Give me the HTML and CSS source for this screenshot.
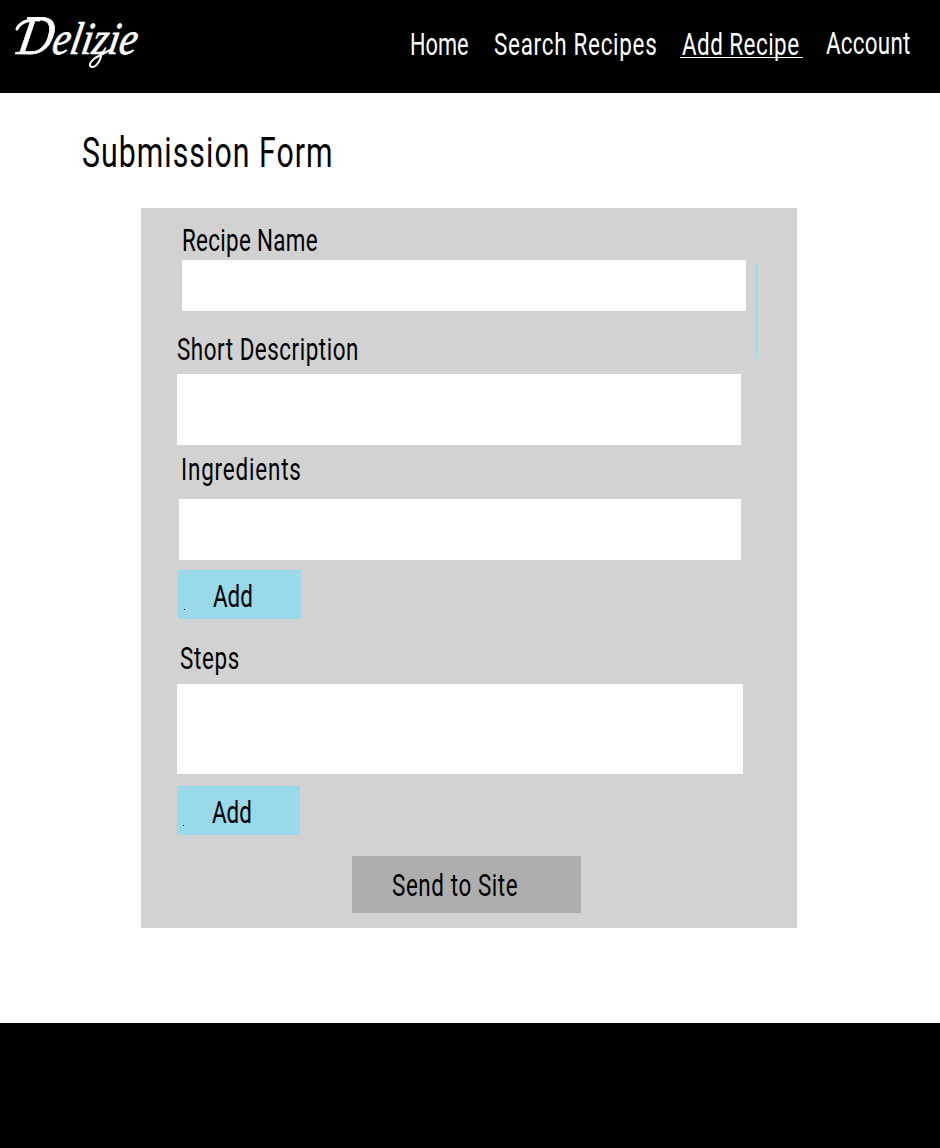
FILE: index.html
```html
<!DOCTYPE html>
<html lang="en">
<head>
<meta charset="utf-8">
<title>Delizie - Add Recipe</title>
<link rel="stylesheet" href="styles.css">
</head>
<body>
<header class="site-header">
  <div class="logo">
    <span class="logo-text"><span class="logo-cap">D</span>elizie</span>
    <svg class="logo-swash" width="140" height="80" viewBox="0 0 140 80" fill="none" stroke="#fff" stroke-linecap="round" stroke-linejoin="round">
      <path stroke-width="2" d="M100 53C103 57 97 67 92 67C88 66 90 62 95 58L112 49"/>
      <path stroke-width="3" d="M17 29C20 22 29 19 39 20"/>
    </svg>
  </div>
  <nav class="nav">
    <a class="nav-item home"><span class="type">Home</span></a>
    <a class="nav-item search"><span class="type">Search Recipes</span></a>
    <a class="nav-item add active"><span class="type">Add Recipe</span></a>
    <a class="nav-item account"><span class="type">Account</span></a>
  </nav>
</header>
<main class="main">
  <h1 class="title"><span class="type">Submission Form</span></h1>
  <form class="panel">
    <label class="label label-name"><span class="type">Recipe Name</span></label>
    <div class="field field-name"></div>
    <label class="label label-desc"><span class="type">Short Description</span></label>
    <div class="field field-desc"></div>
    <label class="label label-ingredients"><span class="type">Ingredients</span></label>
    <div class="field field-ingredients"></div>
    <div class="add-button add-ingredient"><i class="dot"></i><span class="type">Add</span></div>
    <label class="label label-steps"><span class="type">Steps</span></label>
    <div class="field field-steps"></div>
    <div class="add-button add-step"><i class="dot"></i><span class="type">Add</span></div>
    <div class="send-button"><span class="type">Send to Site</span></div>
    <i class="scroll-line"></i>
  </form>
</main>
<footer class="site-footer"></footer>
</body>
</html>
```
FILE: styles.css
```css
* { box-sizing: border-box; }
body {
  margin: 0;
  display: flex;
  flex-direction: column;
  height: 1148px;
  overflow: hidden;
  background: #fff;
  color: #000;
  font: 400 32px/32px Roboto, sans-serif;
}
.type {
  display: block;
  width: max-content;
  white-space: nowrap;
  transform-origin: 0 0;
  transform: scaleX(var(--fit, .7));
}

.site-header {
  display: flex;
  justify-content: space-between;
  height: 93px;
  background: #000;
  color: #fff;
}
.logo { position: relative; width: 140px; padding: 5px 0 0 16px; }
.logo-text {
  display: block;
  width: max-content;
  font: italic 400 46px/60px "Liberation Serif", serif;
  -webkit-text-stroke: .7px #fff;
  transform-origin: 0 47px;
  transform: scaleX(.87) skewX(-12deg);
}
.logo-cap { font-size: 56px; }
.logo-swash { position: absolute; left: 0; top: 0; }
.nav { display: flex; width: 530px; padding-top: 28px; }
.nav-item { display: block; height: 30px; }
.home { --fit: .68; width: 84px; }
.search { width: 186px; letter-spacing: 1.05px; }
.add { width: 123px; padding-left: 2px; letter-spacing: .68px; }
.active { border-bottom: 1px solid #fff; }
.account { margin: -1px 0 0 23px; letter-spacing: .35px; }

.main { height: 930px; padding: 39px 0 0 81px; }
.title {
  --fit: .72;
  margin: 0;
  padding-left: 1px;
  font-weight: 400;
  font-size: 42px;
  line-height: 42px;
  letter-spacing: 1.45px;
}
.panel {
  position: relative;
  width: 656px;
  height: 720px;
  margin: 34px 0 0 60px;
  padding: 16px 0 0 36px;
  background: #d2d2d2;
}
.label { display: block; height: 32px; }
.field { background: #fff; }
.label-name { margin-left: 5px; letter-spacing: .45px; }
.field-name { width: 564px; height: 51px; margin: 4px 0 22px 5px; }
.label-desc { letter-spacing: .76px; }
.field-desc { width: 564px; height: 71px; margin: 9px 0 8px; }
.label-ingredients { margin-left: 4px; letter-spacing: 1.2px; }
.field-ingredients { width: 562px; height: 61px; margin: 14px 0 10px 2px; }
.label-steps { margin-left: 3px; letter-spacing: .95px; }
.field-steps { width: 566px; height: 90px; margin: 10px 0 12px; }
.add-button {
  position: relative;
  width: 123px;
  height: 49px;
  padding: 10px 0 0 35px;
  background: #99d9ea;
}
.add-ingredient { margin: 0 0 23px 1px; }
.dot { position: absolute; left: 6px; top: 39px; width: 1px; height: 1px; background: #000; }
.send-button {
  width: 229px;
  height: 57px;
  margin: 21px 0 0 175px;
  padding: 13px 0 0 40px;
  background: #aeaeae;
  letter-spacing: .85px;
}
.scroll-line { position: absolute; left: 615px; top: 57px; width: 1px; height: 93px; background: #8cdaf0; }
.site-footer { height: 125px; background: #000; }
```
